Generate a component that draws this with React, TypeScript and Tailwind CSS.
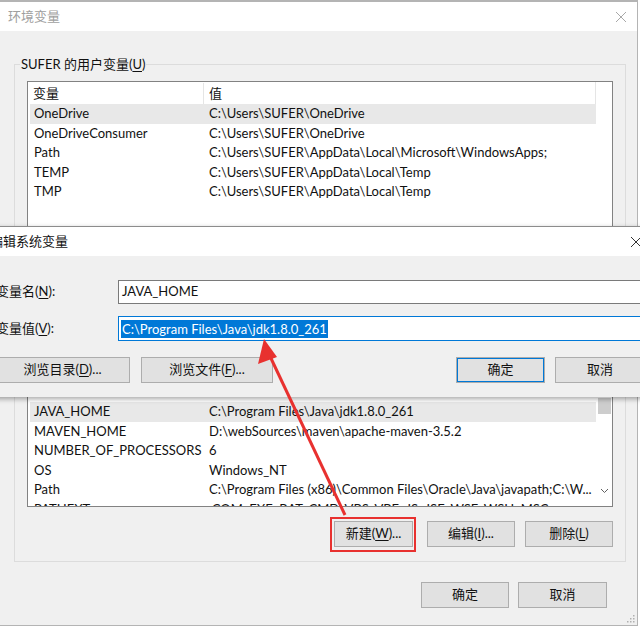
import React from 'react';

const U = ({ children }: { children: React.ReactNode }) => <span className="underline underline-offset-2">{children}</span>;

type Row = { name: string; value: string; selected?: boolean };

const userRows: Row[] = [
  { name: 'OneDrive', value: 'C:\\Users\\SUFER\\OneDrive', selected: true },
  { name: 'OneDriveConsumer', value: 'C:\\Users\\SUFER\\OneDrive' },
  { name: 'Path', value: 'C:\\Users\\SUFER\\AppData\\Local\\Microsoft\\WindowsApps;' },
  { name: 'TEMP', value: 'C:\\Users\\SUFER\\AppData\\Local\\Temp' },
  { name: 'TMP', value: 'C:\\Users\\SUFER\\AppData\\Local\\Temp' },
];

const sysRows: Row[] = [
  { name: 'JAVA_HOME', value: 'C:\\Program Files\\Java\\jdk1.8.0_261', selected: true },
  { name: 'MAVEN_HOME', value: 'D:\\webSources\\maven\\apache-maven-3.5.2' },
  { name: 'NUMBER_OF_PROCESSORS', value: '6' },
  { name: 'OS', value: 'Windows_NT' },
  { name: 'Path', value: 'C:\\Program Files (x86)\\Common Files\\Oracle\\Java\\javapath;C:\\W...' },
  { name: 'PATHEXT', value: '.COM;.EXE;.BAT;.CMD;.VBS;.VBE;.JS;.JSE;.WSF;.WSH;.MSC' },
];

function VarRow({ row }: { row: Row }) {
  return (
    <div className={`flex h-[19.6px] items-center w-[566px] ml-[2px] ${row.selected ? 'bg-[#e8e8e8]' : ''}`}>
      <div className="w-[178px] pl-[4px] whitespace-nowrap overflow-hidden">{row.name}</div>
      <div className="flex-1 pl-[1px] whitespace-nowrap overflow-hidden">{row.value}</div>
    </div>
  );
}

function WinButton({ children, className = '' }: { children: React.ReactNode; className?: string }) {
  return (
    <div className={`h-[26px] flex items-center justify-center bg-[#e1e1e1] border border-[#adadad] ${className}`}>
      {children}
    </div>
  );
}

function CloseX({ color }: { color: string }) {
  return (
    <svg width="12" height="12" viewBox="0 0 12 12">
      <path d="M1 1L11 11M11 1L1 11" stroke={color} strokeWidth="1" fill="none" />
    </svg>
  );
}

export default function App() {
  return (
    <div className="relative w-[640px] h-[626px] overflow-hidden bg-white text-[13px] text-[#111] font-['Lato','Noto_Sans_CJK_SC',sans-serif]">
      {/* 环境变量 window (inactive, behind) */}
      <div className="w-[638px] h-[626px] flex flex-col border-t-2 border-r border-b border-[#b4b4b4] bg-[#f0f0f0]">
        <div className="h-[29px] bg-white flex items-center justify-between pl-[8px] pr-[10px]">
          <span className="text-[#a0a0a0]">环境变量</span>
          <CloseX color="#a8a8a8" />
        </div>

        {/* user variables */}
        <div className="relative mt-[33px] ml-[14px] mr-[11px] border border-[#dcdcdc] pt-[16px] px-[12px] pb-[12px]">
          <span className="absolute -top-[10px] left-[5px] px-[1px] bg-[#f0f0f0]">
            SUFER 的用户变量(<U>U</U>)
          </span>
          <div className="h-[160px] bg-white border border-[#828282] overflow-hidden">
            <div className="flex h-[22px] pt-[1px] items-center w-[568px] border-r border-[#e5e5e5]">
              <div className="w-[176px] h-full flex items-center pl-[5px] border-r border-[#e5e5e5]">变量</div>
              <div className="flex-1 pl-[5px]">值</div>
            </div>
            {userRows.map((r) => (
              <VarRow key={r.name} row={r} />
            ))}
          </div>
        </div>

        {/* system variables */}
        <div className="relative mt-[8px] ml-[14px] mr-[11px] border border-[#dcdcdc] pt-[16px] px-[12px] pb-[14px]">
          <span className="absolute -top-[10px] left-[5px] px-[1px] bg-[#f0f0f0]">
            系统变量(<U>S</U>)
          </span>
          <div className="h-[228px] bg-white border border-[#828282] overflow-hidden flex">
            <div className="flex-1 pt-[122px]">
              {sysRows.map((r) => (
                <VarRow key={r.name} row={r} />
              ))}
            </div>
            <div className="w-[17px] flex flex-col justify-between items-center">
              <div className="w-[13px] h-[16px] bg-[#cdcdcd] mt-[118px]" />
              <svg width="9" height="6" viewBox="0 0 9 6" className="mb-[12px]">
                <path d="M1 1L4.5 4.5L8 1" stroke="#606060" fill="none" />
              </svg>
            </div>
          </div>
          <div className="flex justify-end gap-[10px] mt-[14px] pr-[0px]">
            <WinButton className="w-[79px]">
              新建(<U>W</U>)...
            </WinButton>
            <WinButton className="w-[88px] ml-[4px]">
              编辑(<U>I</U>)...
            </WinButton>
            <WinButton className="w-[88px]">
              删除(<U>L</U>)
            </WinButton>
          </div>
        </div>

        <div className="flex justify-end gap-[9px] mt-[20px] pr-[30px]">
          <WinButton className="w-[88px] h-[25px]">确定</WinButton>
          <WinButton className="w-[89px] h-[25px]">取消</WinButton>
        </div>
        <div className="flex-1 flex items-end justify-end pr-[2px] pb-[2px]">
          <svg width="9" height="9" viewBox="0 0 9 9">
            {[
              [7, 1], [7, 4], [4, 4], [7, 7], [4, 7], [1, 7],
            ].map(([x, y]) => (
              <rect key={`${x}-${y}`} x={x} y={y} width="1.5" height="1.5" fill="#b0b0b0" />
            ))}
          </svg>
        </div>
      </div>

      {/* 编辑系统变量 dialog (active, on top) */}
      <div className="absolute left-[-12px] top-[226px] w-[670px] h-[171px] flex flex-col border-t border-[#8c8c8c] bg-[#f0f0f0] shadow-[0_2px_5px_rgba(0,0,0,0.35)]">
        <div className="h-[29px] bg-white flex items-center justify-between pl-[2px] pr-[16px]">
          <span>编辑系统变量</span>
          <CloseX color="#333" />
        </div>
        <div className="flex flex-col pt-[24px] pl-[8px]">
          <div className="flex items-center">
            <div className="w-[122px]">
              变量名(<U>N</U>):
            </div>
            <div className="flex-1 h-[24px] bg-white border border-[#7a7a7a] flex items-center pl-[3px]">JAVA_HOME</div>
          </div>
          <div className="flex items-center mt-[12px]">
            <div className="w-[122px]">
              变量值(<U>V</U>):
            </div>
            <div className="flex-1 h-[25px] bg-white border border-[#0078d7] flex items-center pl-[2px]">
              <span className="bg-[#0078d7] text-white px-[1px] leading-[18px]">C:\Program Files\Java\jdk1.8.0_261</span>
            </div>
          </div>
          <div className="flex mt-[16px] -ml-[2px]">
            <WinButton className="w-[135px] ml-[1px]">
              浏览目录(<U>D</U>)...
            </WinButton>
            <WinButton className="w-[132px] ml-[11px]">
              浏览文件(<U>F</U>)...
            </WinButton>
            <WinButton className="w-[89px] ml-[183px] border-[#0078d7] shadow-[inset_0_0_0_1px_#0078d7]">确定</WinButton>
            <WinButton className="w-[90px] ml-[10px]">取消</WinButton>
          </div>
        </div>
      </div>

      {/* red annotation */}
      <svg className="absolute inset-0 pointer-events-none" width="640" height="626" viewBox="0 0 640 626">
        <line x1="345" y1="515" x2="268" y2="352" stroke="#e8312f" strokeWidth="3" />
        <path d="M264 339L258 364L277 357Z" fill="#e8312f" />
        <rect x="331" y="518" width="84" height="33" fill="none" stroke="#e8312f" strokeWidth="2" />
      </svg>
    </div>
  );
}
